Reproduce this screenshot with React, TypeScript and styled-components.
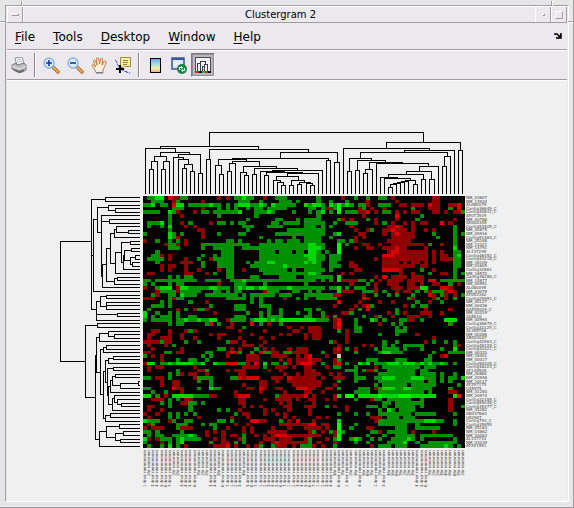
import React from "react";
import styled, { createGlobalStyle, css } from "styled-components";

const GlobalStyle = createGlobalStyle`
  * { box-sizing: border-box; }
  body { margin: 0; background: #e6e6e6; font-family: "DejaVu Sans", Verdana, sans-serif; color: #000; }
  button { font: inherit; color: inherit; border: 0; background: none; padding: 0; margin: 0; }
`;

const LIGHT = "#ffffff";
const SHADE = "#a09da3";
const PANEL = "#ebe9ed";

const Desktop = styled.div`
  position: relative;
  min-height: 100vh;
  display: flex;
  padding: 5px 1px 1px 5px;
  background: #e6e6e6;
  border-right: 1px solid ${SHADE};
  border-bottom: 1px solid ${SHADE};
`;

const Notch = styled.i<{ $side: "left" | "right"; $upright?: boolean }>`
  position: absolute;
  ${(p) => (p.$side === "left" ? "left" : "right")}: ${(p) => (p.$upright ? (p.$side === "left" ? "21px" : "20px") : "0")};
  top: ${(p) => (p.$upright ? "1px" : "21px")};
  width: ${(p) => (p.$upright ? "2px" : "5px")};
  height: ${(p) => (p.$upright ? "5px" : "2px")};
  ${(p) =>
    p.$upright
      ? css`border-left: 1px solid ${SHADE}; border-right: 1px solid ${LIGHT};`
      : css`border-top: 1px solid ${SHADE}; border-bottom: 1px solid ${LIGHT};`}
`;

const Window = styled.main`
  flex: 1;
  min-width: 0;
  display: flex;
  flex-direction: column;
  margin: 0 3px 4px 0;
  padding: 0 1px 0 1px;
  background: ${PANEL};
  border: 1px solid ${SHADE};
  border-right: 1px solid ${LIGHT};
  border-bottom: 1px solid ${LIGHT};
`;

const TitleBar = styled.header`
  display: flex;
  height: 17px;
  border-top: 1px solid ${LIGHT};
  border-bottom: 1px solid ${SHADE};
`;

const Title = styled.h1`
  flex: 1;
  margin: 0;
  padding-left: 2px;
  font-size: 10px;
  line-height: 15px;
  font-weight: 400;
  text-align: center;
  border-left: 1px solid ${LIGHT};
`;

const FrameButton = styled.button`
  display: grid;
  place-items: center;
  width: 16px;
  border-left: 1px solid ${LIGHT};
  border-right: 1px solid ${SHADE};
`;

const Glyph = styled.span<{ $w: number; $h: number }>`
  width: ${(p) => p.$w}px;
  height: ${(p) => p.$h}px;
  border: 1px solid;
  border-color: ${LIGHT} ${SHADE} ${SHADE} ${LIGHT};
`;

const MenuBar = styled.nav`
  display: flex;
  align-items: center;
  gap: 18px;
  height: 27px;
  padding: 2px 5px 0 8px;
  border-bottom: 1px solid ${SHADE};
`;

const MenuItem = styled.button`
  font-size: 12px;
  line-height: 20px;
  text-align: left;
`;

const Mnemonic = styled.span`
  text-decoration: underline;
  text-underline-offset: 2px;
`;

const DockButton = styled.button`
  margin-left: auto;
  width: 8px;
  height: 8px;
  display: grid;
`;

const ToolBar = styled.div`
  display: flex;
  align-items: center;
  height: 30px;
  border-top: 1px solid ${LIGHT};
  border-bottom: 1px solid ${SHADE};
`;

const Tool = styled.button<{ $pressed?: boolean }>`
  display: grid;
  place-items: center;
  width: 24px;
  height: 24px;
  ${(p) =>
    p.$pressed &&
    css`
      background: #bbb9be;
      border: 1px solid;
      border-color: #7d7b80 ${LIGHT} ${LIGHT} #7d7b80;
      outline: 1px solid #8d8b90;
      outline-offset: -2px;
    `}
`;

const Separator = styled.span`
  width: 2px;
  height: 24px;
  margin: 0 3px;
  border-left: 1px solid #87858a;
  border-right: 1px solid ${LIGHT};
`;

const Figure = styled.section`
  flex: 1;
  display: grid;
  grid-template-columns: 83px minmax(0, 1fr) 36px;
  grid-template-rows: 63px 252px auto;
  column-gap: 3px;
  row-gap: 2px;
  align-content: start;
  padding: 50px 63px 12px 50px;
  background: #f0f0f0;
  border-top: 1px solid ${LIGHT};
`;

const Plot = styled.svg<{ $column: number }>`
  display: block;
  width: 100%;
  height: 100%;
  grid-column: ${(p) => p.$column};
  min-width: 0;
`;

const labelText = css`
  margin: 0;
  padding: 0;
  list-style: none;
  font-size: 4px;
  line-height: 4px;
  color: #3c3c3c;
  white-space: nowrap;
`;

const RowLabels = styled.ol`
  ${labelText}
  display: grid;
  grid-template-rows: repeat(70, minmax(0, 1fr));
  margin-left: -2px;
`;

const ColumnLabels = styled.ol`
  ${labelText}
  grid-column: 2;
  display: grid;
  grid-template-columns: repeat(78, minmax(0, 1fr));
`;

const ColumnLabel = styled.li`
  writing-mode: vertical-rl;
  transform: rotate(180deg);
  text-align: right;
  height: 38px;
`;

const COLORS: Record<string, string> = {
  g: "#009000",
  G: "#00d800",
  H: "#00ff00",
  r: "#900000",
  R: "#d80000",
  Q: "#ff0000",
  S: "#c8c8c8",
};

/* One line per gene: runs of expression level by column; the part after "|" counts from column 39. */
const HEAT = `g1-2 G3-4 R6 r7-8 g9-10 r18 r20 g22-23 G24 g25-26 r29 g32-34|g3 r9 g12 g15 g18-19 r21 r31-32
g2-4 r7 g8 r14 g23-25 g28 g33-35 g37|g3 g6 g10 r15 r22 r31-32
g0-1 G2 g4-5 R7 G8-9 g11-15 G16 g17-18 g20 g22 G23-25 g26-27 G28 g29 G31 g32-36|G0 g1 G2-3 g4 G6 g7 H8 g9 G10 g11 g13-14 r15 g18-20 r23-24 r26-28 R30 r31-32 r35-36 R37
g7-9 r14 g18 g20 g22 g25 g27-28 g30-34|g1-2 g4 r5-6 g7 H8 r13 g14 r16 r19 g26 r30-32 g35 R37
g0-3 G6 g7 r8 r12 g14-15 g17-22 G23 g27-29 G30 g31 g36|g1 g3 G4 g6 H8 g10-12 r13-14 R15 r17 g19-20 r22 r24 r26-27 r31-32 r34 r36-37 g38
g6 r9 g18 g27|g3 r14 R22 g28
g6 g25 g32-33 g37|g0-3 g8 r9 r11 g15 r17 r22 g27 r36
g1-3 G4 g6 r9 g11 r16 g18-19 g21 g23-24 g31-32 g34-37|g0-4 g7 g10-12 r17 g19 r21 r24 r26 r28-29 R33 r35
g1 g4 G6 r10 r12 g24-26 g30-33|g0-2 g4 g6 r11 r20-21 R22 r23 r26 g36
g6 r13-14 g25 g35-38|g0-4 r12 r15 g16 r19-20 R21 r22-24 r26 r29 r31 g36
g0 G6 g7 g9 r14 g18 g23-24 g32-38|g0-4 g7 G8 r13-14 r19 r21 R22 r23-26 g31 g36 g38
G6 g7 r8 r14 g28 g36|g0-3 g6 r12 r14 r21-26 g32 g36
r0 g3 g6 g8 r10 g20-21 g23 g30 g32-33 g35-37|g0-3 g8-9 g11 r12 r20-25 g36
r5 g6-7 r8 r10 g14-25 g28-38|g0 G1-2 g3-4 H8 g10 r14-15 r18 r21-28 g30 r33 g36
g6-8 g14 g17-21 g24-38|g0 G1-3 g4 H8 r12 r15-16 r19-21 R22 r23-24 r29 G36
g3 g19-21 g28-31 g33-35 g37-38|G1-2 g3 g5 H8 r20 R21-22 r23-29 r31 r33 g36-37
g2-3 r4 r6 g14 g17 g19-21 g28-38|G0-2 g3-4 g6-8 R19-21 r22-29 r31 r33-34 g36 G37
g1-4 r6 r10 g13 r16 g17-21 g28-38|g0 G1-2 g3-4 g6-8 r17 r19-29 r31 r33-35 g36-37
g3 r9-11 g14 g18-21 g25 g27-29 G30-31 g32-38|G0 g1 G2 g3 g6-7 r11 r19-22 r24 r26-27 r29 r31 g36-37
r4 r6-7 r10 g14 g18-21 g26-33 G34 g35-38|g0-3 g6-8 r11-12 r19-26 r28-29 g36-37
r4 r6 r10 r13 r18 g20-21 r24 g28-34 g36|g0-4 g6 r12-13 R19-22 r23 g28 r31 g36
r1-2 r10-11 r15 g17 g20-21 g29-38|g0 G1-2 g3 r9 r11 r23 r26 g30 r33-34 g36 g38
g6 g8 g10-11 g20-21 g26-27 g33-36|g0-6 G8 r17 R19 r21-24 r26-28 g36
g0-1 g3-12 g15-18 g21-23 G24 g25-38|g0-2 g4 g6 G8 r9-12 g13-14 g16 r18 r20-23 r25-28 R30-31 g33-38
g0 g2 g6 g8-9 r18 g22-24 g29|g0 r11 g15 r17 r20-22 r25-26 r28 r31-32 g35 r37
r0 g3 G4-6 r8 G9-10 g11-15 G16-17 g18-20 g22 G23 g24 G25-26 g27 G28-29 g30-34 G35 g36-38|g0-4 g6-7 G8 g10 g12-14 r17 r21-23 r25-27 G28-29 R33-34 r35
r3 g4-7 r8 g9-13 g17-18 g20 g22-23 r29 g30-32 g36-37|g1 g3 G8 r9-11 g14-16 r17 g19 r22 r24-25 g27 g29 r30 g31-33 r34 R35 r36
g2 r3 g6-7 G9 g10-12 g15-22 g24 g26-31 g33-35|g0-6 r7-8 r14 g17 g20 g22 g26 R30 r31 g33 r34 r36 g38
r0-2 g6 r7 g8-9 g20-24 g26 g28 r34 g37|g0 g3-7 R14 r15 g25 r26 r31 g32 r34 g36
g4 g6 g11 r15 g26 g28|R8 r13 r18 r21 g27 r30 g33
g2-4 g6 g16 g22-24 g28-30|r7 r12 r14 R15 g16 r24 g26 g28-29
g1 r8 g10 r12 g13-14 r15 g22-24 g30 g33|g0-1 g3 r11 g13 R15 g22 r29 r35
G0 g3 g6 g8 r17 g25 g28 g30 g33 g37|g1 g4 r9-10 g11 r20 g22 r24 r28-30 r33
G0 g2 g4-6 g8 g11-12 g22-24 g28 g30-33|g0-1 g4 r5 g7 g14 r17 g18 r21 r25-27 r30
g0 g2-6 g8-9 G10 g11-12 G13 g14-15 G16-17 r20 g21-24 g26 G27-29 g30 G31 g32 G33-38|G0-2 g3-5 r7 R8 g12 G16 g17 g19 g23-24 r25-26 g28 G34-36
g6 g8-9 g15 R16 g18 r21 R26 g28 r30 g33|r7 Q8 g12 r18 g21 g23 g35
r20-21 g24 r35 r38|r1-3 r7 R8 g12-13 g22 g24
r2-3 r6 r10 g11 r12 r23 r29 r36-37|r1-3 g8 r10 g12-13 g22-24
r1-2 r6 r9 r16 r18-19 r26 r33 r35|r0 r2-3 r10 g18 g22 r27
r1 r4-6 r9 r12 r18 r23 r28 r31|r0 r2-3 r10 r31
r0-3 g4 r5-6 g10 g13 g20 r21-22 r24 r29|g6 r7 r10 g19 g22 r29 g31 g34 g36
r1 r5 g7 r24-26 r28|r8 r14 r16 g19 g21 g24-28 g36 r37
r2 r9 g18-19 r21 r23 g27 r29 r31 r35 r37-38|r0 r7 R8 g10 r12 g17 g19-22 g24 g28 g33 G36
r0-1 g5-6 r8-9 g15-16 r20 R21 r22 g23 g26 R28 g29-30 r31-32 g34-35 r36-38|r0 g4 r7-8 g12 g18 G19-20 g21-23 g31 g35-38
g0 r2 r4 g14 g16 r20 r25-27 r31-34 r37|r0 R1 r5 S8 g30 r33 R34
r4 g8 g11-12 g15 r25-27 r33 r35 r37-38|r0 R1 r2-3 r7 g8 g15-17 g22-24 g29-30
r0 G1-2 g4-5 G6 g7 G8-11 g12-13 G14 G17 g18-19 R20-22 g23-24 r25 R27 G29 g31-32 g34 r35 r37 R38|R0-1 r2 g4 r7 R8 g10 G13 g14 G15 g17-19 G20-22 g23 G24-26 g27 G28 g29 G30 g31-32 G33 g34 g36
r1 r3-4 r12 r24-27 g29 r32-34 r36|r0-1 r5 g7-8 g12 r17 g19-27 g29-31
r1 g8 r13-14 g15 r20 r22-24 r30 r33|r0-2 g10-12 g14 r15-16 g17 g20-26 g28-29
g6 g8 r9 r11-12 r15 r23-24 r34 r37|r0-3 r6 r8 g12 g18-26 g28-31 g33 g36
g0-1 r3-4 g6 r12 g13-16 g21-22 R23 r24 R25-27 r31-33 R35 r36-38|r0-2 r4 r7-9 g12-14 g17-18 G19-21 g22-25 G26-28 g29-31 g33 g35-36 G38
r4 r7-8 g13 g16 r28-29 r32 r35-38|r0-3 g8 g12 g18-28 g30-31 g33 g35
r4 r7-8 g16 r24 r28-29 r36-38|r0-3 r7 g17 g19-24 g26-31 g37
g0-1 R7 r8-9 g13 G16 g17-18 r25-26 R28 r29 r32-33 R37-38|R0 r1-2 r5-6 g8 g13-15 r17 g18 G19-21 g22-23 G24-25 g26-30 g35
g2 g5 r9 r22 r28 r34|r0-1 r4 g12-15 g18-28 g30 r35-36
G0-1 g3 r5 G7-11 g12-15 r16-17 r22 R23-25 g32 r33-38|R0 r2 r7 G8 H10-11 G13-17 H18 G19-22 H23-25 G26-31 G36 Q37
r2-4 g6 g8 r10-11 r23-24 r29 r32-35 r37|r1-2 r5 r7 g12 r16 g17-18 g20-25 g28 r35
g4 g6 r9-10 g11-12 g14 r23-24 r33 r35|r2 g19-20 g22-28 r35
r1-2 g6 g11 r24 r26 r28 r34-35|r0-2 g5 r7 r10 g15-17 g19 g22-26 g28 r35 g38
r1 r4 g11 g18 g20 r23 r29 r31 r35|r1 r10 g18 G20 g21 g23-26 r35
r0 r3 g6 g8 g10 g12 g22 r24-25 r29 r32 r34|r1 g8 g12 g15 g18-25 g27-31 g36
r1 g6 g8 r13 r21 r25 r34 r36|r3 r5 r16-18 g20-22 g24-26
G0 g1-3 r6 g7 g10-11 g18-19 g21 R26-27 r28-29 g33 r35 R37|r2 G8 r17 g18-28 G29-31 g32-33 g36
r1 g2 g8-10 g14 g16-17 r22 r25 r33-38|r0 R1-2 r4-5 H8 g12 g18-24 g27 g36
r0 r2-4 g8 r9-11 g17 r20 r24 r26 r31 r35|r0-3 r5 H8 g11 r15-16 g22-24 g27-32
g0-1 g3 g9 r15 r17 r19 r24 r26 r30-34|r1 g2 r4 g6 r7 G8 g9 g16-17 r18 g20-24 r26 r31
g1 g3-4 g7-10 G11 g12 r15 r19 r21-22 g24 r27 r29 r31 R32-34 r35-38|r0-3 r7 H8 g15 g19 g22-26 g28-35
G0 r1 r3 g4-6 g8 G9 g10-13 r17 r19 r23 g24 r29-31 r33-35|r0 g1 r5 g7 H8 g11 G12 g13 g16 g18 g21-24 G25 g26 g28 g36
g0 r4 g6 g8 G9 g16 r19-20 g22 g24 r28 r31 R32 r33-38|r0 g1 r3 r7 g12 g15 g20-23 G24 g27 g30-36
g1 g4 G6 g8 r10 r17-19 R20 r22 r25 r27 g28 g31 r32-34 r36 g38|g0-1 r2 r4 g7 r16 g18-20 g22-24 g28-33 G34 g35 g37`;

type Cell = { x: number; y: number; w: number; fill: string };

const cells: Cell[] = HEAT.split("\n").flatMap((line, y) =>
  line.split("|").flatMap((part, half) =>
    part.split(" ").map((run) => {
      const [a, b] = run.slice(1).split("-").map(Number);
      return { x: a + half * 39, y, w: (b ?? a) - a + 1, fill: COLORS[run[0]] };
    }),
  ),
);

/* Sample tree forks: left, right, height, then where each arm ends. */
const SAMPLE_TREE = `28 40 133 204 204,34 52 109 133 204,64 76 133 204 204,70 88 109 133 204,43 79 94 109 109
127 139 130 204 204,151 163 139 204 204,133 157 118 130 139,115 145 103 204 118,100 130 97 204 103,175 187 145 204 204
115 181 88 97 145,61 148 82 94 88,16 106 70 204 82,199 211 103 204 204,208 850 22 64 52,61 355 64 70 73,208 505 73 103 82
421 592 82 100 112,583 598 112 204 204,277 565 100 103 106,559 571 106 204 204,235 319 103 121 109,226 244 121 204 148
238 250 148 204 204,277 358 109 115 124,268 286 115 139 204,262 274 139 204 204,310 409 124 142 130,301 319 142 204 151
313 325 151 204 204,343 472 130 148 136,337 349 148 204 204,397 547 136 139 204,361 433 139 204 142,379 488 142 151 145
373 385 151 204 204,442 535 145 154 204,409 475 154 166 166,400 421 166 204 172,412 430 172 204 181,424 436 181 204 204
454 493 166 181 172,448 460 181 204 204,478 511 172 178 175,472 484 178 204 204,499 517 175 204 181,511 523 181 204 204
610 868 70 204 76,739 961 52 70 76,955 967 76 204 204,793 943 76 82 204,661 922 82 100 94,913 931 94 124 204,907 919 124 204 204
628 694 100 139 106,622 634 139 204 204,652 736 106 136 112,646 658 136 204 204,688 788 112 133 115,676 697 133 145 204
670 682 145 204 204,709 865 115 204 124,838 895 124 139 204,799 874 139 148 163,868 883 163 204 204,745 850 148 157 163
844 856 163 204 204,721 772 157 204 160,733 811 160 204 166,796 826 166 169 178,820 832 178 204 204,784 805 169 172 204
772 793 172 175 204,760 781 175 178 204,751 769 178 187 204,745 757 187 204 204`;

/* Gene tree forks: top, bottom, depth, then where each arm ends. */
const GENE_TREE = `22 34 166 268 268,55 67 196 268 268,46 61 175 268 196,28 358 124 166 139,196 196 124 130 130,88 304 130 142 268
52 127 142 175 154,76 259 154 268 157,94 94 154 178 178,88 100 178 268 268,223 292 157 169 268,175 274 169 181 193
265 283 193 202 268,262 271 202 268 268,130 220 181 193 196,118 142 193 199 268,109 127 199 268 235,121 130 235 268 268
187 250 196 214 268,157 217 214 241 220,154 163 241 268 268,196 238 220 223 268,181 211 223 244 241,175 184 244 268 268
202 223 241 256 247,196 208 256 268 268,217 229 247 268 268,334 391 139 151 268,319 349 151 169 169,316 325 169 268 268
337 358 169 268 268,346 346 169 268 268,373 373 139 202 202,370 379 202 268 268,154 514 31 124 106,406 622 106 142 136
400 412 142 268 268,496 748 136 139 148,724 769 148 169 268,709 742 169 208 196,703 715 208 268 268,730 751 196 220 211
724 736 220 268 268,748 757 211 268 268,442 547 139 148 151,430 454 148 175 268,424 439 175 268 193,433 445 193 268 268
478 613 151 160 160,472 487 160 169 268,466 478 169 268 268,544 685 160 166 166,511 577 166 175 172,505 520 175 190 268
499 508 190 268 268,535 616 172 190 175,532 541 190 268 268,589 643 175 181 187,571 607 181 187 268,559 586 187 196 211
553 562 196 268 268,580 595 211 265 268,574 586 265 268 268,625 661 187 193 268,616 637 193 268 202,628 643 202 268 214
640 649 214 268 268,676 694 166 181 268,670 682 181 268 268`;

const forks = (source: string) => source.split(/[,\n]/).map((f) => f.split(" ").map(Number));
const samplePath = forks(SAMPLE_TREE).map(([l, r, h, a, b]) => `M${l} ${a}V${h}H${r}V${b}`).join("");
const genePath = forks(GENE_TREE).map(([t, b, d, x, y]) => `M${x} ${t}H${d}V${b}H${y}`).join("");

const GENES = `NM_03607 NM_13934 AL080079 Contig36649_C Contig40831_C AF073519 NM_00788 AK000345 Contig53405_C NM_02875
NM_00916 Contig51464_C NM_20188 NM_14321 NM_14791 AL137295 Contig46452_C Contig40218_C NM_16109 NM_01605
Contig32861 NM_16570 Contig38288_C NM_14877 NM_00951 AL080095 NM_03079 AF052162 Contig25991_C NM_00127
NM_00436 AA555029_C NM_02019 X05610 NM_00994 Contig36679_C Contig32125_C AL355708 NM_00286 AB033007
Contig42563_C Contig48328_C Contig42421_C NM_00320 NM_18401 NM_00017 Contig58328_C Contig46223_C AF148505 NM_00882
NM_20946 NM_18117 AF257175 U45975 NM_01280 NM_20974 Contig32185_C Contig55048_C Contig35377_C NM_01282
AB037863 U82987 Contig753_C Contig35855 NM_04163 NM_03862 NM_03083 AL137743 NM_03239 AF201951`.split(/\s/);

const SHORT = [1, 7, 8, 13, 14, 15, 18, 24, 46, 48, 50, 51, 53, 54];
const LONG_TAIL = [56, 58, 66, 67, 68];
const SAMPLES = Array.from({ length: 78 }, (_, i) =>
  SHORT.includes(i) || (i > 54 && !LONG_TAIL.includes(i)) ? `${(i % 7) + 1}hr nnnnnnn` : `${(i % 7) + 1}.4nor nnnnnnnnn`,
);

const PrintIcon = () => (
  <svg width="16" height="16" viewBox="0 0 16 16">
    <path d="M4 1l7-1 2 7-7 2z" fill="#fff" stroke="#8c95a5" />
    <path d="M6 3l4-1M6 5l5-1" stroke="#a8b8d5" />
    <path d="M1 8l4-2 1 2 7-2 2 2v5l-6 3-8-4z" fill="#b9b9be" stroke="#77777d" />
    <path d="M1 9l8 3 6-3" fill="none" stroke="#eee" />
    <path d="M3 12l5 2 5-2v2l-5 2-6-3z" fill="#66666c" />
    <path d="M11 12h2" stroke="#d8c24e" />
  </svg>
);

const ZoomIcon = ({ plus }: { plus?: boolean }) => (
  <svg width="17" height="17" viewBox="0 0 17 17">
    <path d="M9 9l2 2" stroke="#777" strokeWidth="2" />
    <path d="M10 10l5 5" stroke="#a9672b" strokeWidth="3.5" strokeLinecap="round" />
    <path d="M10 10l5 5" stroke="#f4bc72" strokeWidth="1.6" strokeLinecap="round" />
    <circle cx="6" cy="6" r="5" fill="#d5efff" stroke="#8eb3d8" strokeWidth="1.4" />
    <path d={plus ? "M3 6h6M6 3v6" : "M3 6h6"} stroke="#17369a" strokeWidth="1.6" />
  </svg>
);

const HandIcon = () => (
  <svg width="17" height="17" viewBox="0 0 17 17">
    <path
      d="M5 15.500C4 12 1 10 1 8.500S3 8 4.500 10L2.500 4.500C2 3 4 2.500 4.500 4L6 8 5.500 2C5.500.500 7.500.500 7.800 2L8.500 7 9.500 2C10 .500 11.500 1 11.500 2.500L11 8 13 4.500C14 3.500 15.500 4 15 5.500C14 8.500 14 10 12 12.500V15.500Z"
      fill="#fff0dd"
      stroke="#b97730"
    />
    <path d="M5 16h7" stroke="#4a78c8" />
  </svg>
);

const DataTipIcon = () => (
  <svg width="17" height="17" viewBox="0 0 17 17">
    <path d="M0 3c2 1 2 5 5 8s6 4 10 5" fill="none" stroke="#2335e6" strokeDasharray="4 1" />
    <path d="M5.500.500h10v9h-6l-3 2v-2h-1z" fill="#f6efa0" stroke="#9b8d3b" />
    <path d="M8 3.500h5M8 5.500h5M8 7.500h4" stroke="#938540" />
    <path d="M1 12h8M5 8v8" stroke="#000" strokeWidth="2" />
  </svg>
);

const ColorBarIcon = () => (
  <svg width="17" height="17" viewBox="0 0 17 17">
    <defs>
      <linearGradient id="spectrum" x1="0" y1="0" x2="0" y2="1">
        <stop offset="0" stopColor="#7d93e8" />
        <stop offset=".35" stopColor="#8de0e4" />
        <stop offset=".7" stopColor="#f5efa2" />
        <stop offset="1" stopColor="#f0a08c" />
      </linearGradient>
    </defs>
    <rect x="3.500" y="1.500" width="10" height="14" fill="url(#spectrum)" stroke="#000" />
  </svg>
);

const RefreshIcon = () => (
  <svg width="17" height="17" viewBox="0 0 17 17">
    <rect x="1" y="1" width="12" height="11" fill="#d8e5f7" stroke="#3a5797" strokeWidth="1.500" />
    <path d="M1 2h12" stroke="#3a5797" strokeWidth="2" />
    <path d="M3 9l7-5M3 6l3-2" stroke="#fff" />
    <circle cx="11" cy="12" r="5" fill="#12843f" />
    <path d="M8.500 13v-2.500h2M13.500 11v2.500h-2" fill="none" stroke="#fff" strokeWidth="1.200" />
    <path d="M10 9l2 1.500-2 1.500zM12 12l-2 1.500 2 1.500z" fill="#fff" />
  </svg>
);

const TreeIcon = () => (
  <svg width="16" height="16" viewBox="0 0 16 16" shapeRendering="crispEdges">
    <rect width="16" height="14" fill="#f4f4f6" />
    <path d="M.500 14V.500h15V14" fill="none" stroke="#4b4b50" />
    <path d="M2.500 14V6.500h3M5.500 14V4.500h5V7M7.500 14V9.500h2V14M9.500 9V7.500h3V14" fill="none" stroke="#3b3b3b" />
    <path d="M0 15h4M10 15h3" stroke="#e31818" strokeWidth="2" />
    <path d="M4 15h3M13 15h3" stroke="#101010" strokeWidth="2" />
    <path d="M7 15h3" stroke="#14c52c" strokeWidth="2" />
  </svg>
);

const MENUS = ["File", "Tools", "Desktop", "Window", "Help"];

export default function App() {
  return (
    <>
      <GlobalStyle />
      <Desktop>
        <Notch $side="left" $upright />
        <Notch $side="left" />
        <Notch $side="right" $upright />
        <Notch $side="right" />
        <Window>
          <TitleBar>
            <FrameButton aria-label="Window menu"><Glyph $w={8} $h={3} /></FrameButton>
            <Title>Clustergram 2</Title>
            <FrameButton aria-label="Minimize"><Glyph $w={3} $h={3} /></FrameButton>
            <FrameButton aria-label="Maximize"><Glyph $w={8} $h={8} /></FrameButton>
          </TitleBar>
          <MenuBar>
            {MENUS.map((name) => (
              <MenuItem key={name}><Mnemonic>{name[0]}</Mnemonic>{name.slice(1)}</MenuItem>
            ))}
            <DockButton aria-label="Dock window">
              <svg width="8" height="6" viewBox="0 0 8 6"><path d="M1 2V1h2l3 3M7 0v5H2" fill="none" stroke="#000" strokeWidth="1.500" /><path d="M7 1v4H3z" /></svg>
            </DockButton>
          </MenuBar>
          <ToolBar role="toolbar" aria-label="Figure tools">
            <Tool aria-label="Print"><PrintIcon /></Tool>
            <Separator />
            <Tool aria-label="Zoom in"><ZoomIcon plus /></Tool>
            <Tool aria-label="Zoom out"><ZoomIcon /></Tool>
            <Tool aria-label="Pan"><HandIcon /></Tool>
            <Tool aria-label="Data cursor"><DataTipIcon /></Tool>
            <Separator />
            <Tool aria-label="Insert colorbar"><ColorBarIcon /></Tool>
            <Tool aria-label="Refresh view"><RefreshIcon /></Tool>
            <Tool aria-label="Show dendrogram" aria-pressed="true" $pressed><TreeIcon /></Tool>
          </ToolBar>
          <Figure>
            <Plot $column={2} viewBox="9 18 966 189" preserveAspectRatio="none" shapeRendering="crispEdges" role="img" aria-label="Sample dendrogram">
              <path d={samplePath} transform="translate(.5 .5)" fill="none" stroke="#000" strokeWidth="3" strokeLinecap="square" />
            </Plot>
            <Plot $column={1} viewBox="21 18 249 756" preserveAspectRatio="none" shapeRendering="crispEdges" role="img" aria-label="Gene dendrogram">
              <path d={genePath} transform="translate(.5 .5)" fill="none" stroke="#000" strokeWidth="3" strokeLinecap="square" />
            </Plot>
            <Plot $column={2} viewBox="0 0 78 70" preserveAspectRatio="none" shapeRendering="crispEdges" role="img" aria-label="Expression heat map">
              <rect width="78" height="70" />
              {cells.map((c, i) => <rect key={i} x={c.x} y={c.y} width={c.w} height="1" fill={c.fill} />)}
            </Plot>
            <RowLabels>{GENES.map((gene, i) => <li key={i}>{gene}</li>)}</RowLabels>
            <ColumnLabels>{SAMPLES.map((name, i) => <ColumnLabel key={i}>{name}</ColumnLabel>)}</ColumnLabels>
          </Figure>
        </Window>
      </Desktop>
    </>
  );
}
